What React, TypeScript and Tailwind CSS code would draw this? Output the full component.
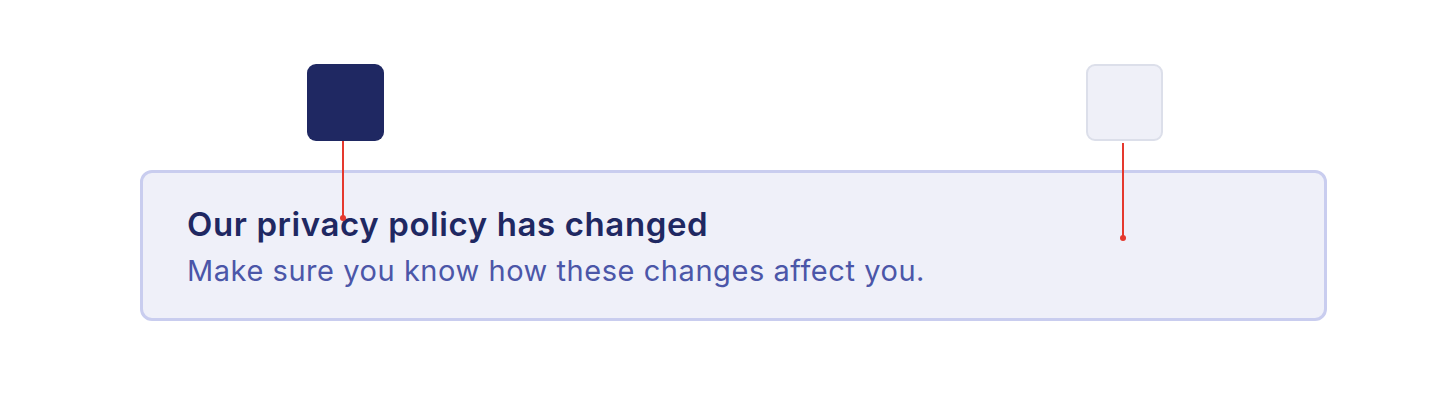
function Swatch({ className, lineClass }: { className: string; lineClass: string }) {
  return (
    <div className={`relative h-[77px] w-[77px] rounded-[9px] ${className}`}>
      {/* red pointer from swatch to where the colour is used */}
      <div className={`absolute z-10 flex w-[6px] flex-col items-center ${lineClass}`}>
        <div className="w-[2px] flex-1 bg-[#e5392e]" />
        <div className="-mt-[3px] h-[6px] w-[6px] rounded-full bg-[#e5392e]" />
      </div>
    </div>
  );
}

export default function App() {
  return (
    <div className="h-[400px] w-full bg-white" style={{ fontFamily: "Inter, 'Noto Sans', sans-serif" }}>
      <div className="flex pt-[64px] pl-[307px] gap-[702px]">
        <Swatch className="bg-[#1f2862]" lineClass="left-[33px] top-full h-[80px]" />
        <Swatch className="border-2 border-[#dcdfea] bg-[#eff0f8]" lineClass="left-[32px] top-[77px] h-[98px]" />
      </div>

      <div className="ml-[140px] mt-[29px] h-[151px] w-[1187px] rounded-[12px] border-[3px] border-[#c9cdef] bg-[#eff0f9] pl-[44px] pt-[31px]">
        <h2 className="text-[33px] font-semibold leading-[40px] tracking-[0.6px] text-[#1f2862]">Our privacy policy has changed</h2>
        <p className="mt-[9px] text-[29px] leading-[36px] tracking-[0.55px] text-[#4b56a8]">Make sure you know how these changes affect you.</p>
      </div>
    </div>
  );
}
